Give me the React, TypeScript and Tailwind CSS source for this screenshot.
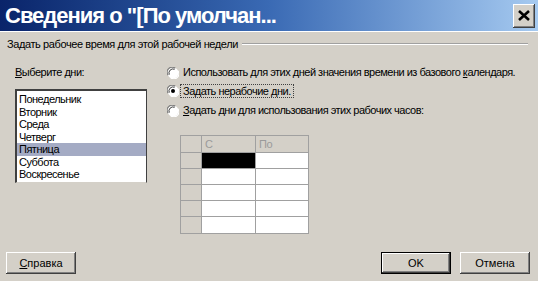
import React from "react";

const days = ["Понедельник", "Вторник", "Среда", "Четверг", "Пятница", "Суббота", "Воскресенье"];

function Radio({ checked }: { checked?: boolean }) {
  return (
    <svg width="12" height="12" viewBox="0 0 12 12" className="shrink-0">
      <circle cx="6" cy="6" r="5.5" fill="#ffffff" />
      <path d="M1.2 8.2 A5 5 0 0 1 8.2 1.2" stroke="#808080" strokeWidth="1.2" fill="none" />
      <path d="M2.3 7.6 A4 4 0 0 1 7.6 2.3" stroke="#404040" strokeWidth="1" fill="none" />
      <path d="M10.8 3.8 A5 5 0 0 1 3.8 10.8" stroke="#ffffff" strokeWidth="1.2" fill="none" />
      {checked && <circle cx="6" cy="6" r="2" fill="#000000" />}
    </svg>
  );
}

function Btn({ children, def }: { children: React.ReactNode; def?: boolean }) {
  return (
    <div
      className={
        "w-[70px] h-[22px] flex items-center justify-center text-[11px] text-black bg-[#d4d0c8] " +
        (def
          ? "border border-black shadow-[inset_-1px_-1px_#404040,inset_1px_1px_#ffffff,inset_-2px_-2px_#808080]"
          : "shadow-[inset_-1px_-1px_#404040,inset_1px_1px_#ffffff,inset_-2px_-2px_#808080]")
      }
    >
      {children}
    </div>
  );
}

export default function App() {
  return (
    <div
      className="w-[538px] h-[281px] bg-[#d4d0c8] flex flex-col overflow-hidden text-black"
      style={{ fontFamily: '"Liberation Sans", Arial, sans-serif' }}
    >
      {/* title bar */}
      <div className="h-[31px] flex items-center justify-between pl-[5px] pr-[3px] bg-gradient-to-r from-[#0a246a] via-[#3a6ab4] to-[#a6caf0]">
        <span className="text-white font-bold text-[22px] leading-none tracking-[-1px] whitespace-nowrap">
          Сведения о "[По умолчан...
        </span>
        <div className="w-[22px] h-[24px] bg-[#d4d0c8] flex items-center justify-center shadow-[inset_-1px_-1px_#404040,inset_1px_1px_#ffffff,inset_-2px_-2px_#808080]">
          <svg width="12" height="11" viewBox="0 0 12 11">
            <path d="M1 1 L11 10 M11 1 L1 10" stroke="#000" strokeWidth="2.6" />
          </svg>
        </div>
      </div>
      <div className="h-px bg-[#ffffff]" />

      {/* group header */}
      <div className="flex items-center mt-[5px] pl-[7px] pr-[10px] h-[14px] text-[11px]">
        <span className="whitespace-nowrap tracking-[-0.4px]">Задать рабочее время для этой рабочей недели</span>
        <div className="flex-1 ml-[4px] flex flex-col">
          <div className="h-px bg-[#a0a0a0]" />
          <div className="h-px bg-white" />
        </div>
      </div>

      <div className="flex mt-[15px] text-[11px] tracking-[-0.5px]">
        {/* left column */}
        <div className="pl-[15px] w-[167px] shrink-0">
          <div className="h-[13px] leading-[13px]">
            <span className="underline">В</span>ыберите дни:
          </div>
          <div className="mt-[10px] w-[132px] h-[94px] bg-white border-t-2 border-l-2 border-r border-b border-t-[#404040] border-l-[#404040] border-r-[#404040] border-b-[#d4d0c8] pt-[2px]">
            {days.map((d) => (
              <div
                key={d}
                className={
                  "h-[12.5px] leading-[12.5px] pl-[2px] " + (d === "Пятница" ? "bg-[#a4abc4]" : "")
                }
              >
                {d}
              </div>
            ))}
          </div>
        </div>

        {/* right column */}
        <div className="flex flex-col whitespace-nowrap">
          <div className="flex items-center gap-[3px] h-[13px]">
            <Radio />
            <span className="px-[1px]">
              Использовать для этих дней значения времени из базового <span className="underline">к</span>алендаря.
            </span>
          </div>
          <div className="flex items-center gap-[1px] h-[14px] mt-[5px]">
            <Radio checked />
            <span className="px-[2px] border border-dotted border-[#404040] leading-[12px]">
              За<span className="underline">д</span>ать нерабочие дни.
            </span>
          </div>
          <div className="flex items-center gap-[3px] h-[13px] mt-[6px]">
            <Radio />
            <span className="px-[1px]">
              <span className="underline">З</span>адать дни для использования этих рабочих часов:
            </span>
          </div>

          <div className="ml-[13px] mt-[18px] w-[129px] border border-[#a0a0a0] bg-[#d4d0c8]">
            <div className="flex h-[17px] border-b border-[#a0a0a0]">
              <div className="w-[21px] border-r border-[#a0a0a0]" />
              <div className="w-[54px] border-r border-[#a0a0a0] pl-[3px] text-[#9a9a9a] leading-[16px]">С</div>
              <div className="flex-1 pl-[3px] text-[#9a9a9a] leading-[16px]">По</div>
            </div>
            {[0, 1, 2, 3, 4].map((i) => (
              <div key={i} className={"flex h-[16px] " + (i < 4 ? "border-b border-[#a0a0a0]" : "")}>
                <div className="w-[21px] border-r border-[#a0a0a0]" />
                <div className={"w-[54px] border-r border-[#a0a0a0] " + (i === 0 ? "bg-black" : "bg-white")} />
                <div className="flex-1 bg-white" />
              </div>
            ))}
          </div>
        </div>
      </div>

      {/* buttons */}
      <div className="flex items-center mt-[18px] pl-[6px] pr-[8px] text-[11px]">
        <Btn>
          <span className="underline">С</span>правка
        </Btn>
        <div className="flex-1" />
        <Btn def>OK</Btn>
        <div className="w-[9px]" />
        <Btn>Отмена</Btn>
      </div>
    </div>
  );
}
